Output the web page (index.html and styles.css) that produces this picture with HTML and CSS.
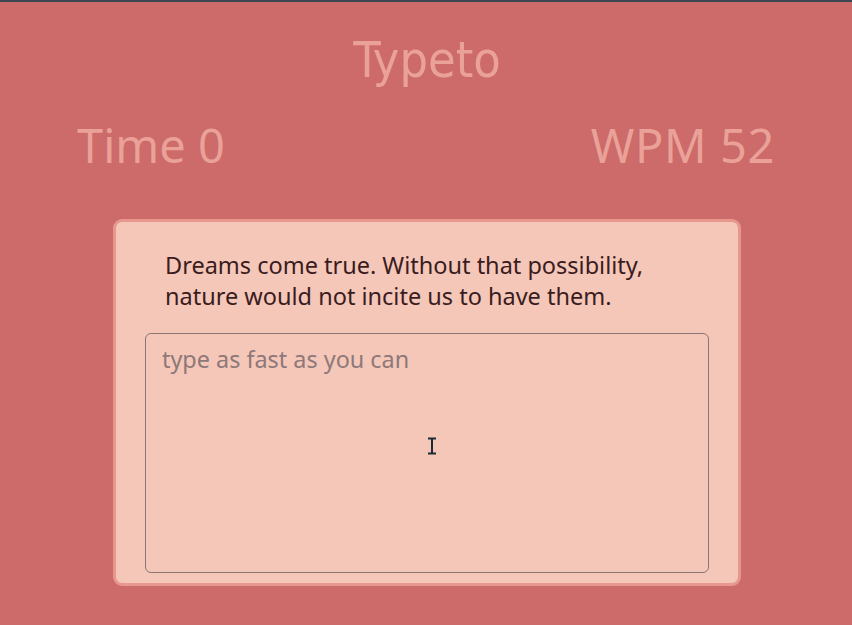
FILE: index.html
```html
<!DOCTYPE html>
<html lang="en">
<head>
<meta charset="utf-8">
<title>Typeto</title>
<link rel="stylesheet" href="styles.css">
</head>
<body>
<div class="topline"></div>
<main class="app">
  <h1 class="title">Typeto</h1>
  <div class="stats">
    <div class="stat">Time 0</div>
    <div class="stat stat-wpm">WPM 52</div>
  </div>
  <section class="card">
    <p class="quote">Dreams come true. Without that possibility, nature would not incite us to have them.</p>
    <textarea class="input" placeholder="type as fast as you can"></textarea>
  </section>
</main>
<svg class="cursor" width="10" height="18" viewBox="0 0 10 18"><path d="M1 1.5h8M1 16.5h8M5 1.5v15" stroke="#1c2a33" stroke-width="2" fill="none"/></svg>
</body>
</html>
```
FILE: styles.css
```css
html, body {
  margin: 0;
  padding: 0;
}
body {
  background: #cd6a6a;
  width: 852px;
  height: 625px;
  overflow: hidden;
  position: relative;
  font-family: "Noto Sans", sans-serif;
}
.topline {
  height: 2px;
  background: #3b4752;
}
.app {
  display: flex;
  flex-direction: column;
  align-items: center;
  padding-left: 2px;
}
.title {
  margin: 28px 0 0;
  font-family: "DejaVu Sans Condensed", "DejaVu Sans", sans-serif;
  font-weight: normal;
  font-size: 50px;
  line-height: 60px;
  color: #e9a198;
}
.stats {
  align-self: stretch;
  display: flex;
  justify-content: space-between;
  padding: 0 77px 0 75px;
  margin-top: 25px;
}
.stat {
  font-size: 47px;
  line-height: 60px;
  color: #e9a198;
}
.stat-wpm {
  letter-spacing: 0.6px;
}
.card {
  margin-top: 44px;
  background: #f4c7b8;
  border: 3px solid #e8978f;
  border-radius: 9px;
  padding: 28px 29px 10px;
  box-sizing: border-box;
  width: 628px;
}
.quote {
  margin: 0 0 21px;
  padding: 0 24px 0 20px;
  font-size: 23.5px;
  line-height: 31px;
  color: #3a1c1e;
}
.input {
  display: block;
  width: 564px;
  height: 240px;
  box-sizing: border-box;
  margin: 0;
  padding: 10px 16px;
  background: transparent;
  border: 1px solid #8b7577;
  border-radius: 6px;
  font-family: "Noto Sans", sans-serif;
  font-size: 23.4px;
  line-height: 30px;
  resize: none;
  outline: none;
  color: #3a1c1e;
}
.input::placeholder {
  color: #8f7879;
}
.cursor {
  position: absolute;
  left: 427px;
  top: 437px;
}
```
